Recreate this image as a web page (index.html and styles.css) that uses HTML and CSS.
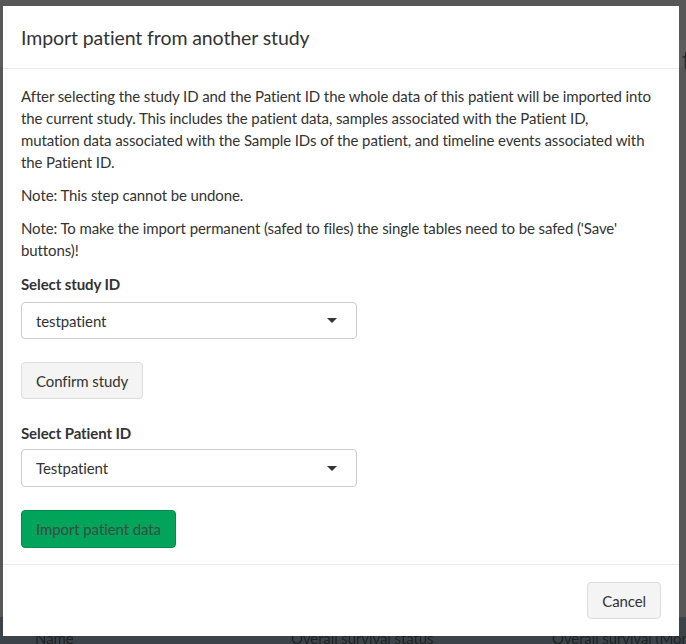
FILE: index.html
```html
<!DOCTYPE html>
<html lang="en">
<head>
<meta charset="utf-8">
<title>Import patient</title>
<link rel="stylesheet" href="styles.css">
</head>
<body>
<div class="under-band"></div>
<div class="under-strip">
  <span class="col col-name">Name</span>
  <span class="col col-status">Overall survival status</span>
  <span class="col col-months">Overall survival (Mon</span>
</div>
<div class="under-title">t</div>
<div class="modal">
  <div class="modal-header">
    <h4 class="modal-title">Import patient from another study</h4>
  </div>
  <div class="modal-body">
    <p>After selecting the study ID and the Patient ID the whole data of this patient will be imported into the current study. This includes the patient data, samples associated with the Patient ID,<br>mutation data associated with the Sample IDs of the patient, and timeline events associated with the Patient ID.</p>
    <p>Note: This step cannot be undone.</p>
    <p class="last-note">Note: To make the import permanent (safed to files) the single tables need to be safed ('Save' buttons)!</p>
    <div class="form-group">
      <label class="control-label">Select study ID</label>
      <div class="select">
        <span class="select-value">testpatient</span>
        <span class="caret"></span>
      </div>
    </div>
    <button class="btn btn-default btn-confirm">Confirm study</button>
    <div class="form-group">
      <label class="control-label label-second">Select Patient ID</label>
      <div class="select">
        <span class="select-value">Testpatient</span>
        <span class="caret"></span>
      </div>
    </div>
    <button class="btn btn-success">Import patient data</button>
  </div>
  <div class="modal-footer">
    <button class="btn btn-default">Cancel</button>
  </div>
</div>
</body>
</html>
```
FILE: styles.css
```css
* { box-sizing: border-box; }
html, body { margin: 0; height: 100%; }
body {
  background: #575757;
  padding: 6px 7px 0 3px;
  font-family: Lato, "Liberation Sans", sans-serif;
  font-size: 15px;
  letter-spacing: -0.1px;
  color: #333;
  overflow: hidden;
}
.under-band {
  position: fixed;
  left: 0; right: 0; top: 40px;
  height: 27px;
  background: #5d5d5d;
}
.under-strip {
  position: fixed;
  left: 0; right: 0; bottom: 0;
  height: 27px;
  background: #3c4449;
  color: #1f2326;
  font-size: 15px;
  line-height: 16px;
}
.under-strip .col { position: absolute; top: 13px; white-space: nowrap; }
.col-name { left: 35px; }
.col-status { left: 291px; }
.col-months { left: 552px; }
.under-title {
  position: fixed;
  left: 682px; top: 44px;
  font-size: 26px;
  color: #2a2a2a;
}
.modal {
  position: relative;
  z-index: 1;
  background: #fff;
  width: 676px;
}
.modal-header {
  height: 63px;
  border-bottom: 1px solid #e9e9e9;
  padding: 0 18px;
  display: flex;
  align-items: center;
}
.modal-title {
  margin: 0;
  font-weight: 400;
  font-size: 19.5px;
  letter-spacing: -0.1px;
  color: #333;
}
.modal-body {
  padding: 16px 18px 16px 18px;
}
.modal-body p {
  margin: 0 0 11px;
  line-height: 22px;
}
.modal-body p.last-note { margin-bottom: 12px; }
.form-group { margin: 0; }
.control-label {
  display: block;
  font-weight: 700;
  line-height: 22px;
  margin-bottom: 7px;
}
.label-second { margin-bottom: 5px; }
.select {
  width: 336px;
  height: 37px;
  border: 1px solid #ccc;
  border-radius: 4px;
  display: flex;
  align-items: center;
  justify-content: space-between;
  padding: 0 19px 0 14px;
  margin-bottom: 23px;
}
.label-second + .select { height: 38px; }
.caret {
  width: 0; height: 0;
  border-left: 5px solid transparent;
  border-right: 5px solid transparent;
  border-top: 5px solid #333;
}
.btn {
  font-family: inherit;
  font-size: 15px;
  letter-spacing: -0.1px;
  height: 37px;
  padding: 0 14px;
  border-radius: 4px;
  border: 1px solid #ddd;
  background: #f4f4f4;
  color: #333;
  display: block;
}
.btn-confirm { margin-bottom: 23px; }
.btn-success {
  height: 38px;
  background: #00a45a;
  border-color: #008d4c;
  color: #3b4b44;
}
.modal-footer {
  border-top: 1px solid #e9e9e9;
  padding: 17px 18px 17px;
  display: flex;
  justify-content: flex-end;
}
```
